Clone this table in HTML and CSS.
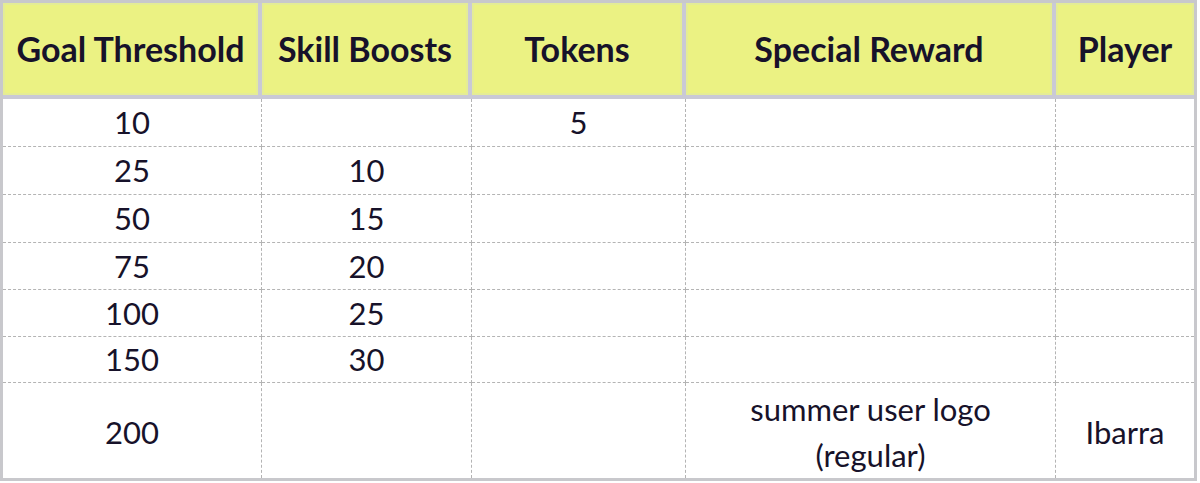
FILE: index.html
```html
<!DOCTYPE html>
<html lang="en">
<head>
<meta charset="utf-8">
<title>Rewards table</title>
<link rel="stylesheet" href="styles.css">
</head>
<body>
<table class="rewards">
  <colgroup>
    <col class="c1"><col class="c2"><col class="c3"><col class="c4"><col class="c5">
  </colgroup>
  <thead>
    <tr class="head">
      <th>Goal Threshold</th>
      <th>Skill Boosts</th>
      <th>Tokens</th>
      <th>Special Reward</th>
      <th>Player</th>
    </tr>
  </thead>
  <tbody>
    <tr class="h48"><td>10</td><td></td><td>5</td><td></td><td></td></tr>
    <tr class="h48"><td>25</td><td>10</td><td></td><td></td><td></td></tr>
    <tr class="h48"><td>50</td><td>15</td><td></td><td></td><td></td></tr>
    <tr class="h47"><td>75</td><td>20</td><td></td><td></td><td></td></tr>
    <tr class="h47"><td>100</td><td>25</td><td></td><td></td><td></td></tr>
    <tr class="h46"><td>150</td><td>30</td><td></td><td></td><td></td></tr>
    <tr class="last"><td>200</td><td></td><td></td><td>summer user logo<br>(regular)</td><td>Ibarra</td></tr>
  </tbody>
</table>
</body>
</html>
```
FILE: styles.css
```css
html, body {
  margin: 0;
  padding: 0;
  background: #ffffff;
}

.rewards {
  border-collapse: separate;
  border-spacing: 0;
  table-layout: fixed;
  width: 1197px;
  border: 3px solid #c8c8cc;
  font-family: Lato, "Open Sans", sans-serif;
  color: #17122a;
}

.c1 { width: 259px; }
.c2 { width: 210px; }
.c3 { width: 214px; }
.c4 { width: 370px; }
.c5 { width: 138px; }

.rewards th,
.rewards td {
  box-sizing: border-box;
  padding: 0;
  text-align: center;
  vertical-align: middle;
}

.head th {
  height: 96px;
  background: #ebf283;
  font-weight: 700;
  font-size: 34px;
  line-height: 1.2;
  border-right: 4px solid #c9c9d6;
  border-bottom: 4px solid #c9c9d6;
  box-shadow: inset 0 0 0 2px #e4ec96;
}

.head th:last-child {
  border-right: none;
}

.rewards td {
  font-size: 31px;
  line-height: 1.1;
  border-right: 1px dashed #b4b4b4;
  border-bottom: 1px dashed #b4b4b4;
}

.rewards td:last-child {
  border-right: none;
}

.rewards tr:last-child td {
  border-bottom: none;
}

.h48 td { height: 48px; }
.h47 td { height: 47px; }
.h46 td { height: 46px; }
.last td {
  height: 95px;
  line-height: 46px;
  padding-top: 3px;
}
```
